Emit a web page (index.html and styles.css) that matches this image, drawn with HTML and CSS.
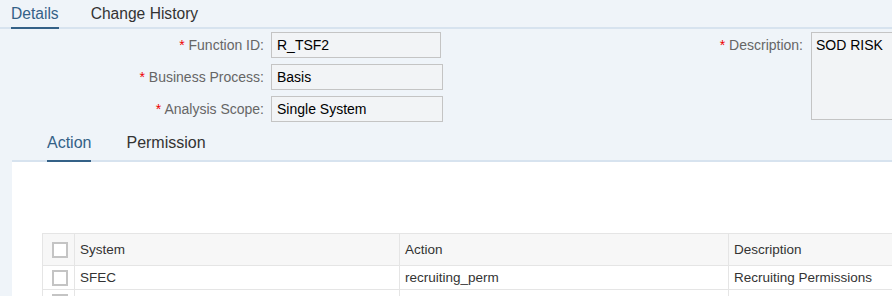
FILE: index.html
```html
<!DOCTYPE html>
<html>
<head>
  <title>Function Details</title>
  <link rel="stylesheet" href="styles.css">
</head>
<body>
  <div class="tabs top-tabs">
    <div class="tab active">Details</div>
    <div class="tab">Change History</div>
  </div>

  <div class="form">
    <div class="form-left">
      <label class="lbl"><span class="req">*</span> Function ID:</label>
      <div class="field narrow">R_TSF2</div>
      <label class="lbl"><span class="req">*</span> Business Process:</label>
      <div class="field">Basis</div>
      <label class="lbl"><span class="req">*</span> Analysis Scope:</label>
      <div class="field">Single System</div>
    </div>
    <div class="form-right">
      <label class="lbl top"><span class="req">*</span> Description:</label>
      <div class="field area">SOD RISK</div>
    </div>
  </div>

  <div class="section">
    <div class="tabs inner-tabs">
      <div class="tab active">Action</div>
      <div class="tab">Permission</div>
    </div>
    <div class="panel">
      <table class="grid">
        <thead>
          <tr>
            <th class="sel"><span class="cb"></span></th>
            <th class="c-system">System</th>
            <th class="c-action">Action</th>
            <th class="c-desc">Description</th>
          </tr>
        </thead>
        <tbody>
          <tr>
            <td class="sel"><span class="cb"></span></td>
            <td>SFEC</td>
            <td>recruiting_perm</td>
            <td>Recruiting Permissions</td>
          </tr>
          <tr>
            <td class="sel"><span class="cb"></span></td>
            <td></td>
            <td></td>
            <td></td>
          </tr>
        </tbody>
      </table>
    </div>
  </div>
</body>
</html>
```

FILE: styles.css
```css
html, body { overflow: hidden; }
body { margin: 0; background: #eff4f9; font-family: "Liberation Sans", Arial, sans-serif; color: #333; width: 892px; height: 296px; }

/* tabs */
.tabs { display: flex; border-bottom: 2px solid #d7e3ef; }
.tab { font-size: 15.6px; color: #333; }
.tab.active { color: #346187; border-bottom: 2px solid #346187; margin-bottom: -2px; }
.top-tabs { height: 27px; padding-left: 11px; gap: 32px; }
.top-tabs .tab { line-height: 27px; height: 27px; }
.inner-tabs { height: 34px; padding-left: 35px; gap: 35px; }
.inner-tabs .tab { font-size: 16px; line-height: 34px; height: 34px; }

/* form */
.form { display: flex; padding-top: 3px; height: 90px; }
.form-left { display: grid; grid-template-columns: 264px auto; grid-auto-rows: 26px; column-gap: 7px; row-gap: 6px; align-items: center; align-content: start; width: 443px; }
.form-right { display: grid; grid-template-columns: 120px 81px; column-gap: 8px; align-items: start; align-content: start; margin-left: 240px; }
.lbl { font-size: 14px; color: #666; text-align: right; white-space: nowrap; }
.lbl.top { line-height: 26px; }
.req { color: #e00; }
.field { box-sizing: border-box; height: 26px; width: 172px; border: 1px solid #c4c4c4; background: #f2f4f6; font-size: 14px; color: #000; padding: 0 5px; line-height: 24px; }
.field.narrow { width: 170px; }
.field.area { height: 88px; width: 81px; padding: 0 4px; border-right: none; white-space: nowrap; }

/* action section */
.section { margin-left: 12px; margin-top: 4px; }
.panel { box-sizing: border-box; background: #fff; height: 134px; padding: 71px 0 0 30px; overflow: hidden; }
.grid { border-collapse: collapse; font-size: 13.5px; color: #333; width: 850px; table-layout: fixed; }
.grid th, .grid td { border: 1px solid #e5e5e5; text-align: left; padding: 0 5px; white-space: nowrap; font-weight: normal; }
.grid th:last-child, .grid td:last-child { border-right: none; }
.grid th { background: #f7f7f7; height: 31px; }
.grid td { height: 23px; }
.grid .sel { width: 22px; padding: 0 0 0 9px; }
.c-system { width: 314px; }
.c-action { width: 318px; }
.cb { display: block; box-sizing: border-box; width: 16px; height: 16px; border: 2px solid #c4c4c4; background: #fff; }
```
